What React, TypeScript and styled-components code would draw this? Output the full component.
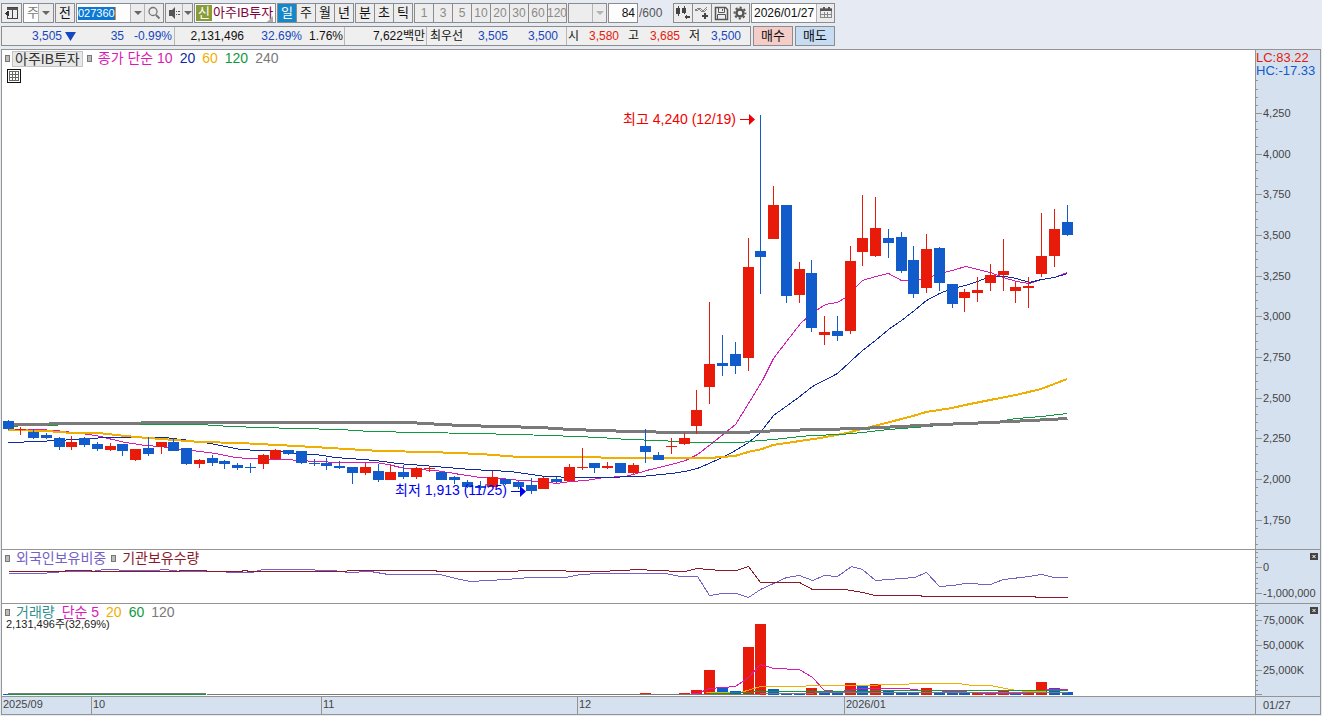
import React from "react";
import styled, { createGlobalStyle } from "styled-components";

const RED = "#e81a0a";
const BLUE = "#115bcb";
const MAGENTA = "#d91ab4";
const NAVY = "#0f2aa5";
const AMBER = "#f0ae00";
const GREEN = "#109a40";
const GRAY = "#7a7a7a";
const PURPLE = "#7460c6";
const MAROON = "#8a1a2a";
const TEAL = "#30908f";
const LINE = "#949494";
const SANS = `"Liberation Sans", "Noto Sans CJK KR", sans-serif`;

const GlobalStyle = createGlobalStyle`
  * { box-sizing: border-box; }
  body { margin: 0; background: #e6eaf3; font-family: ${SANS}; font-size: 12px; color: #111; }
  button, input, select { font: inherit; color: inherit; margin: 0; padding: 0; border: 0; background: none; border-radius: 0; }
  svg { display: block; }
`;

/* ---------- toolbar ---------- */

const Header = styled.header`
  display: flex;
  flex-direction: column;
  gap: 3px;
  padding: 3px 1px;
  white-space: nowrap;
`;

const ToolRow = styled.div`
  display: flex;
  gap: 1px;
  height: 20px;
`;

const Box = styled.div<{ $w: number; $fill?: string }>`
  display: flex;
  flex: none;
  align-items: stretch;
  width: ${(p) => p.$w}px;
  border: 1px solid #8c8c8c;
  background: ${(p) => p.$fill ?? "#fdfdfd"};
  overflow: hidden;
`;

const ToolButton = styled.button<{ $divided?: boolean; $active?: boolean; $muted?: boolean }>`
  display: flex;
  flex: 1 1 0;
  min-width: 0;
  align-items: center;
  justify-content: center;
  line-height: 18px;
  font-size: ${(p) => (p.$muted ? 12 : 13)}px;
  background: ${(p) => (p.$active ? "#1787c8" : "#ededed")};
  color: ${(p) => (p.$active ? "#fff" : p.$muted ? "#8a8a8a" : "#111")};
  & + & { border-left: 1px solid #8c8c8c; }
`;

const Arrow = styled.button<{ $w: number; $muted?: boolean }>`
  flex: none;
  display: flex;
  align-items: center;
  justify-content: center;
  width: ${(p) => p.$w}px;
  background: #ececec;
  border-left: 1px solid #b4b4b4;
  &::after {
    content: "";
    border: 4px solid transparent;
    border-bottom: 0;
    border-top-color: ${(p) => (p.$muted ? "#b4b4b4" : "#666")};
  }
`;

const PlainSelect = styled.select`
  appearance: none;
  flex: 1;
  min-width: 0;
  padding-left: 3px;
  font-size: 13px;
  line-height: 18px;
  color: #777;
`;

const CodeInput = styled.input`
  align-self: center;
  width: 38px;
  height: 13px;
  margin: 0 auto 0 1px;
  font-size: 11px;
  background: #0a78d4;
  color: #fff;
  border-right: 1px solid #f08a24;
`;

const IconButton = styled.button<{ $w: number }>`
  flex: none;
  display: flex;
  align-items: center;
  justify-content: center;
  width: ${(p) => p.$w}px;
  background: #ececec;
  border-left: 1px solid #b4b4b4;
  &:first-child { border-left: 0; }
`;

const Badge = styled.span`
  flex: none;
  width: 16px;
  margin: 1px;
  line-height: 16px;
  text-align: center;
  font-size: 13px;
  background: #8a9c38;
  color: #fff;
`;

const StockName = styled.span`
  line-height: 18px;
  font-size: 13px;
  color: #80003c;
`;

const Corner = styled.span`
  align-self: flex-end;
  margin-left: -6px;
  border: 3px solid #aaa;
  border-top-color: transparent;
  border-left-color: transparent;
`;

const NumberInput = styled.input<{ $align: "left" | "right" }>`
  flex: 1;
  min-width: 0;
  padding: 0 2px;
  text-align: ${(p) => p.$align};
`;

const Limit = styled.span`
  width: 33px;
  line-height: 20px;
  color: #555;
`;

const Quote = styled.div`
  display: flex;
  width: 750px;
  border: 1px solid #8c8c8c;
  background: #efefef;
  line-height: 18px;
  margin-right: 1px;
`;

const QuoteCell = styled.div<{ $w: number }>`
  display: flex;
  flex: none;
  width: ${(p) => p.$w}px;
  padding-right: 2px;
  border-right: 1px solid #b8b8b8;
  &:last-child { border-right: 0; }
`;

const Figure = styled.span<{ $w: number; $tone?: string }>`
  flex: none;
  width: ${(p) => p.$w}px;
  text-align: right;
  color: ${(p) => p.$tone ?? "#111"};
`;

const TradeButton = styled.button<{ $fill: string }>`
  width: 40px;
  margin-right: 1px;
  border: 1px solid #8c8c8c;
  background: ${(p) => p.$fill};
  font-size: 13px;
  line-height: 18px;
`;

/* ---------- chart ---------- */

const Chart = styled.main`
  margin: 0 1px;
  border: 1px solid ${LINE};
  background: #fff;
`;

const PaneRow = styled.section`
  display: grid;
  grid-template-columns: minmax(0, 1fr) 65px;
  border-bottom: 1px solid ${LINE};
  &:last-child { border-bottom: 0; }
`;

const Plot = styled.div`
  position: relative;
  overflow: hidden;
`;

const Scale = styled.div`
  position: relative;
  border-left: 1px solid ${LINE};
  background: #d6e1ef;
`;

const Legend = styled.div`
  position: absolute;
  top: 1px;
  left: 3px;
  display: flex;
  align-items: center;
  height: 15px;
  font-size: 14px;
  line-height: 15px;
  white-space: nowrap;
`;

const Marker = styled.i`
  width: 5px;
  height: 7px;
  margin-right: 6px;
  border: 1px solid #777;
  background: #bbb;
`;

const Term = styled.span<{ $tone: string; $gap?: number }>`
  color: ${(p) => p.$tone};
  margin-right: ${(p) => p.$gap ?? 7}px;
`;

const SymbolButton = styled.button`
  height: 16px;
  margin: 0 4px 0 -4px;
  padding: 0 2px;
  border: 1px solid #c4c4c4;
  background: #e8e8e8;
  color: #333;
  line-height: 14px;
`;

const GridButton = styled.button`
  position: absolute;
  top: 19px;
  left: 5px;
`;

const VolumeNote = styled.div`
  position: absolute;
  top: 16px;
  left: 4px;
  font-size: 11px;
  line-height: 9px;
  color: #222;
`;

const Extremes = styled.div`
  position: absolute;
  top: 1px;
  left: 0;
  font-size: 13px;
  line-height: 13px;
`;

const Extreme = styled.div<{ $tone: string }>`
  color: ${(p) => p.$tone};
`;

const CloseButton = styled.button`
  position: absolute;
  top: 3px;
  right: 2px;
  width: 8px;
  height: 7px;
  background: #444;
`;

const Months = styled.div`
  display: flex;
  height: 17px;
  background: #d6e1ef;
  font-size: 11px;
  line-height: 15px;
  color: #444;
  overflow: hidden;
`;

const Month = styled.span<{ $w?: number }>`
  flex: ${(p) => (p.$w ? `0 0 ${p.$w}px` : "1 1 0")};
  padding-left: 1px;
  & + & { border-left: 1px solid ${LINE}; }
`;

const Today = styled.div`
  border-left: 1px solid ${LINE};
  background: #d6e1ef;
  padding-left: 7px;
  font-size: 11px;
  line-height: 16px;
  color: #444;
`;

/* Candles: direction, body top, body bottom, high, low */
type Candle = ["u" | "d", number, number, number, number];
const candles: Candle[] = [
  ["d", 421, 429, 420, 430], ["u", 429, 430, 427, 435], ["d", 432, 438, 429, 439], ["d", 435, 438, 433, 439],
  ["d", 438, 447, 437, 450], ["u", 442, 447, 436, 450], ["d", 438, 445, 437, 447], ["d", 444, 449, 442, 451],
  ["u", 446, 450, 443, 451], ["d", 444, 451, 444, 456], ["u", 449, 460, 449, 461], ["d", 448, 454, 437, 456],
  ["u", 442, 447, 442, 454], ["d", 442, 451, 438, 451], ["d", 448, 464, 448, 465], ["u", 460, 464, 459, 468],
  ["d", 458, 463, 455, 466], ["d", 461, 464, 460, 469], ["d", 465, 468, 463, 470], ["d", 467, 468, 463, 473],
  ["u", 455, 464, 454, 469], ["u", 450, 459, 449, 460], ["d", 450, 454, 450, 455], ["d", 451, 463, 451, 464],
  ["d", 463, 464, 459, 466], ["d", 463, 466, 458, 470], ["d", 466, 468, 461, 469], ["d", 467, 473, 467, 484],
  ["u", 467, 473, 463, 475], ["d", 471, 480, 464, 482], ["u", 472, 480, 465, 480], ["d", 472, 477, 465, 479],
  ["u", 468, 477, 467, 479], ["u", 468, 469, 466, 472], ["d", 472, 480, 472, 480], ["d", 477, 480, 476, 484],
  ["d", 482, 487, 480, 488], ["d", 486, 488, 481, 490], ["u", 477, 487, 471, 488], ["d", 479, 484, 479, 485],
  ["d", 482, 487, 481, 489], ["d", 485, 491, 478, 494], ["u", 478, 489, 477, 489], ["d", 479, 482, 477, 483],
  ["u", 467, 481, 464, 481], ["u", 467, 468, 448, 470], ["d", 463, 468, 463, 473], ["u", 466, 468, 462, 469],
  ["d", 463, 473, 463, 473], ["u", 465, 473, 463, 474], ["d", 446, 452, 429, 463], ["d", 455, 460, 452, 460],
  ["u", 446, 447, 438, 454], ["u", 438, 444, 433, 445], ["u", 410, 426, 390, 434], ["u", 364, 387, 302, 404],
  ["d", 363, 366, 335, 376], ["d", 354, 366, 342, 374], ["u", 267, 358, 238, 371], ["d", 251, 257, 115, 294],
  ["u", 205, 239, 186, 239], ["d", 205, 296, 205, 303], ["u", 269, 295, 262, 303], ["d", 273, 328, 260, 332],
  ["u", 332, 335, 316, 345], ["d", 331, 336, 316, 341], ["u", 261, 331, 246, 334], ["u", 238, 252, 195, 266],
  ["u", 228, 256, 197, 257], ["d", 238, 243, 229, 258], ["d", 237, 271, 232, 273], ["d", 260, 294, 246, 298],
  ["u", 249, 288, 234, 293], ["d", 248, 283, 247, 291], ["d", 284, 304, 284, 308], ["u", 292, 298, 289, 312],
  ["u", 290, 293, 277, 302], ["u", 275, 283, 264, 291], ["u", 271, 275, 239, 291], ["u", 287, 291, 282, 303],
  ["u", 286, 288, 277, 308], ["u", 256, 274, 213, 277], ["u", 229, 256, 209, 267], ["d", 222, 235, 205, 236],
];

/* Volume bars: candle index, direction, top */
const volumes: [number, "u" | "d", number][] = [
  [50, "u", 693], [53, "u", 693], [54, "u", 690], [55, "u", 670], [56, "d", 687], [57, "d", 691], [58, "u", 647],
  [59, "u", 624], [60, "d", 689], [61, "d", 693], [62, "d", 693], [63, "u", 688], [64, "d", 692], [65, "d", 693],
  [66, "u", 683], [67, "d", 686], [68, "u", 684], [69, "d", 690], [70, "d", 693], [71, "d", 693], [72, "u", 688],
  [73, "d", 692], [74, "d", 692], [75, "d", 693], [76, "u", 693], [77, "u", 693], [78, "u", 691], [79, "d", 693],
  [80, "u", 693], [81, "u", 682], [82, "d", 688], [83, "d", 692],
];

const lines = {
  ma10: "14,429 40,429 53,430 65,431 88,434 100,436 112,439 125,442 145,445 160,446 182,449 200,451 215,453 235,457 247,458 285,459 315,461 340,462 375,462 388,464 400,467 415,469 435,470 448,472 460,474 480,477 500,478 520,480 540,481 556,483 570,481 586,480 604,477 624,476 633,474 646,470 671,464 685,460 697,454 710,444 735,424 748,403 762,380 773,358 786,341 800,323 811,313 825,304 837,302 845,297 862,280 875,276 888,273 901,280 914,280 926,278 939,273 952,270 965,266 990,272 1003,277 1016,281 1029,283 1041,279 1054,277 1067,272",
  ma20: "8,442 40,441 53,440 78,439 104,437 165,437 180,439 190,440 210,443 225,446 240,449 258,450 275,450 296,453 315,454 335,457 375,460 397,463 435,466 470,469 510,471 545,476 575,477 600,477 640,476 671,473 684,471 697,468 722,457 735,450 748,442 760,432 773,415 798,397 812,386 837,373 850,361 862,350 875,340 888,329 901,320 914,310 926,300 939,293 952,288 965,285 977,281 990,276 1005,276 1016,278 1029,282 1041,279 1054,277 1067,273",
  ma60: "8,430 47,431 72,433 98,433 125,436 148,438 175,440 200,442 240,443 296,446 330,448 380,451 430,452 480,454 520,457 582,457 620,458 709,458 735,456 748,452 762,449 773,445 800,441 820,438 847,433 862,429 886,423 913,416 926,412 939,410 952,408 965,405 990,400 1016,395 1041,389 1067,379",
  ma120: "8,426 27,425 90,424 200,424 230,426 260,427 296,428 340,429 370,431 420,432 475,433 515,434 550,435 575,436 600,437 627,439 660,440 691,442 740,442 760,440 773,439 800,436 812,435 840,434 862,432 888,429 914,427 939,425 965,423 990,422 1016,418 1041,416 1067,413",
  ma240: "8,424 90,423 192,422 408,422 425,423 460,425 500,426 540,427 570,429 600,430 630,431 680,432 740,432 780,430 820,429 860,428 900,426 940,424 990,422 1030,420 1067,418",
  foreign: "8,573 40,573 53,572 65,571 91,571 104,569 117,569 120,570 142,570 155,570 165,569 180,571 218,571 232,572 252,572 262,569 295,569 333,570 348,572 370,571 388,574 410,574 440,574 455,578 470,581 505,579 530,577 565,577 580,574 600,573 640,573 665,573 680,576 697,576 709,595 722,593 736,593 748,597 760,589 786,577 799,575 812,580 824,575 837,576 851,566 862,569 875,580 888,579 914,577 926,572 939,586 952,585 965,583 990,584 1003,579 1029,576 1041,574 1054,577 1067,577",
  inst: "8,571 64,571 66,570 90,570 92,571 178,571 180,570 205,570 207,571 240,571 244,570 250,571 345,571 348,570 435,570 437,571 505,571 530,570 600,571 640,569 652,570 684,571 697,568 720,570 736,570 748,566 760,582 799,582 812,589 844,589 862,592 875,595 920,595 922,596 1034,596 1036,597 1067,597",
  vol5: "690,693 697,693 709,688 735,686 748,677 760,664 773,668 799,669 812,677 824,690 840,691 862,688 905,688 922,690 960,691 985,693 1022,693 1035,691 1048,689 1067,689",
  vol20: "705,692 740,692 760,686 800,686 812,685 850,685 905,684 912,683 958,683 972,685 990,685 1010,689 1025,691 1067,690",
  vol60: "700,694 740,692 765,691 850,691 890,690 1067,690",
  vol120: "206,694 740,694 780,693 850,692 1067,692",
};

const candleX = (i: number) => Math.floor(8 + (i * 1059) / 83);
const tone = (d: "u" | "d") => (d === "u" ? RED : BLUE);

const Curve = ({ points, color, width = 1 }: { points: string; color: string; width?: number }) => (
  <polyline
    points={points}
    fill="none"
    stroke={color}
    strokeWidth={width}
    transform={width === 2 ? undefined : "translate(0.5 0.5)"}
    shapeRendering="crispEdges"
  />
);

const Canvas = ({ top, height, label, children }: { top: number; height: number; label: string; children: React.ReactNode }) => (
  <svg width="100%" height={height} role="img" aria-label={label}>
    <g transform={`translate(-2 ${-top})`}>{children}</g>
  </svg>
);

type Tick = { y: number; text?: string };
const Ruler = ({ top, height, ticks }: { top: number; height: number; ticks: Tick[] }) => (
  <svg width="64" height={height} fontFamily={SANS} fontSize="11" fill="#444">
    <g transform={`translate(0 ${-top})`}>
      {ticks.map((t) => (
        <g key={t.y}>
          <rect x="0" y={t.y} width={t.text === undefined ? 2 : 6} height="1" fill={LINE} />
          {t.text && <text x="7" y={t.y + 4}>{t.text}</text>}
        </g>
      ))}
    </g>
  </svg>
);

const priceTicks: Tick[] = Array.from({ length: 58 }, (_, i) => {
  const step = i - 4;
  const y = Math.round(113 + step * 8.13);
  return step >= 0 && step % 5 === 0 && step <= 50 ? { y, text: (4250 - step * 50).toLocaleString("en-US") } : { y };
});

const holdingTicks: Tick[] = [
  { y: 552 }, { y: 557 }, { y: 562 }, { y: 567, text: "0" }, { y: 573 }, { y: 578 }, { y: 583 }, { y: 588 },
  { y: 593, text: "-1,000,000" },
];

const volumeTicks: Tick[] = Array.from({ length: 19 }, (_, i) => {
  const y = i === 18 ? 694 : 605 + i * 5;
  const text = ({ 620: "75,000K", 645: "50,000K", 670: "25,000K", 694: "" } as Record<number, string>)[y];
  return { y, text };
});

const CloseMark = ({ label }: { label: string }) => (
  <CloseButton aria-label={label}>
    <svg width="8" height="7" stroke="#fff" strokeWidth="1">
      <path d="M2.500 2L5.500 5M5.500 2L2.500 5" />
    </svg>
  </CloseButton>
);

export default function App() {
  return (
    <>
      <GlobalStyle />
      <Header>
        <ToolRow>
          <Box $w={21}>
            <ToolButton aria-label="패널 전환">
              <svg width="17" height="14" fill="none" shapeRendering="crispEdges">
                <path d="M4.500 4V1.500H14.500V12.500H4.500V10" stroke="#444" />
                <path d="M4 2H15V4H4Z" fill="#555" />
                <path d="M9.500 4V12" stroke="#444" />
                <path d="M6 5V10H5L2 8V7L5 5Z" fill="#333" />
              </svg>
            </ToolButton>
          </Box>
          <Box $w={31}>
            <PlainSelect aria-label="종목 구분" defaultValue="주">
              <option>주</option>
            </PlainSelect>
            <Arrow $w={15} aria-label="종목 구분 열기" />
          </Box>
          <Box $w={20}>
            <ToolButton>전</ToolButton>
          </Box>
          <Box $w={88}>
            <CodeInput aria-label="종목코드" defaultValue="027360" />
            <Arrow $w={14} aria-label="종목 목록" />
            <IconButton $w={19} aria-label="종목 검색">
              <svg width="14" height="14" fill="none" stroke="#777">
                <circle cx="6" cy="5.500" r="4" strokeWidth="1.300" />
                <path d="M9 9L12.500 12.500" strokeWidth="2" />
              </svg>
            </IconButton>
          </Box>
          <Box $w={28}>
            <IconButton $w={16} aria-label="음성">
              <svg width="13" height="12" fill="#555">
                <path d="M1 3H4L7 0V12L4 9H1Z" />
                <path d="M8 4h1v1h-1zM10 4h2v1h-2zM8 7h1v1h-1zM10 7h2v1h-2z" />
              </svg>
            </IconButton>
            <Arrow $w={10} aria-label="음성 설정" />
          </Box>
          <Box $w={82}>
            <Badge>신</Badge>
            <StockName>아주IB투자</StockName>
            <Corner />
          </Box>
          <Box $w={77}>
            {["일", "주", "월", "년"].map((t, i) => (
              <ToolButton key={t} $active={i === 0}>{t}</ToolButton>
            ))}
          </Box>
          <Box $w={58}>
            {["분", "초", "틱"].map((t) => (
              <ToolButton key={t}>{t}</ToolButton>
            ))}
          </Box>
          <Box $w={153}>
            {["1", "3", "5", "10", "20", "30", "60", "120"].map((t) => (
              <ToolButton key={t} $muted>{t}</ToolButton>
            ))}
          </Box>
          <Box $w={39} $fill="#ededed">
            <PlainSelect aria-label="사용자 주기" disabled />
            <Arrow $w={14} $muted aria-label="사용자 주기 열기" />
          </Box>
          <Box $w={30}>
            <NumberInput $align="right" aria-label="표시 봉 수" defaultValue="84" />
          </Box>
          <Limit>/600</Limit>
          <Box $w={77}>
            <ToolButton aria-label="봉 추가">
              <svg width="16" height="16" fill="#444" shapeRendering="crispEdges">
                <path d="M1 3h4v6h-4zM2.500 1h1v10h-1zM7 3h4v5h-4zM8.500 1h1v8h-1z" />
                <path d="M9 12L12 9V11H15V13H12V15Z" />
              </svg>
            </ToolButton>
            <ToolButton aria-label="지표 추가">
              <svg width="16" height="16" fill="none" stroke="#666">
                <path d="M1 6L4 3L8 7L13 2M1 4L3 6L6 3L10 7L13 4" strokeWidth="0.800" />
                <path d="M11 8V14M8 11H14" stroke="#444" strokeWidth="2" />
              </svg>
            </ToolButton>
            <ToolButton aria-label="저장">
              <svg width="15" height="15" fill="none" stroke="#555">
                <path d="M1.500 1.500H11.500L13.500 3.500V13.500H1.500Z" strokeWidth="1.500" />
                <path d="M4.500 2V6.500H10.500V2M3.500 13V8.500H11.500V13M8.500 3V5" />
              </svg>
            </ToolButton>
            <ToolButton aria-label="설정">
              <svg width="14" height="14" fill="none" stroke="#555">
                <circle cx="7" cy="7" r="3.500" strokeWidth="2.400" />
                <circle cx="7" cy="7" r="5.500" strokeWidth="1.800" strokeDasharray="2.200 2.120" strokeDashoffset="1.100" />
              </svg>
            </ToolButton>
          </Box>
          <Box $w={84}>
            <NumberInput $align="left" aria-label="기준일" defaultValue="2026/01/27" />
            <IconButton $w={18} aria-label="달력">
              <svg width="12" height="12" fill="none" stroke="#666" shapeRendering="crispEdges">
                <path d="M0.500 1.500H11.500V10.500H0.500ZM4.500 5V10M7.500 5V10M1 7.500H11" stroke="#888" />
                <path d="M0 3H12M3.500 0V2M8.500 0V2" stroke="#555" strokeWidth="2" />
              </svg>
            </IconButton>
          </Box>
        </ToolRow>
        <ToolRow>
          <Quote>
            <QuoteCell $w={173}>
              <Figure $w={60} $tone="#1448c0">3,505</Figure>
              <Figure $w={15} $tone="#1448c0">
                <svg width="15" height="18" fill="#1448c0"><path d="M3 5H14L8.500 14Z" /></svg>
              </Figure>
              <Figure $w={47} $tone="#1448c0">35</Figure>
              <Figure $w={48} $tone="#1448c0">-0.99%</Figure>
            </QuoteCell>
            <QuoteCell $w={170}>
              <Figure $w={69}>2,131,496</Figure>
              <Figure $w={58} $tone="#1448c0">32.69%</Figure>
              <Figure $w={41}>1.76%</Figure>
            </QuoteCell>
            <QuoteCell $w={82}>
              <Figure $w={80}>7,622백만</Figure>
            </QuoteCell>
            <QuoteCell $w={140}>
              <Figure $w={36}>최우선</Figure>
              <Figure $w={45} $tone="#1448c0">3,505</Figure>
              <Figure $w={50} $tone="#1448c0">3,500</Figure>
            </QuoteCell>
            <QuoteCell $w={183}>
              <Figure $w={12}>시</Figure>
              <Figure $w={40} $tone={RED}>3,580</Figure>
              <Figure $w={20}>고</Figure>
              <Figure $w={41} $tone={RED}>3,685</Figure>
              <Figure $w={20}>저</Figure>
              <Figure $w={41} $tone="#1448c0">3,500</Figure>
            </QuoteCell>
          </Quote>
          <TradeButton $fill="#f4cdc9">매수</TradeButton>
          <TradeButton $fill="#c5dcf3">매도</TradeButton>
        </ToolRow>
      </Header>

      <Chart>
        <PaneRow>
          <Plot>
            <Canvas top={50} height={499} label="아주IB투자 일봉">
              <Curve points={lines.ma10} color={MAGENTA} />
              <Curve points={lines.ma20} color={NAVY} />
              <Curve points={lines.ma60} color={AMBER} width={2} />
              <Curve points={lines.ma120} color={GREEN} />
              <Curve points={lines.ma240} color={GRAY} width={3} />
              {candles.map(([d, top, bottom, high, low], i) => (
                <g key={i} fill={tone(d)}>
                  <rect x={candleX(i)} y={high} width="1" height={low - high} />
                  <rect x={candleX(i) - 5} y={top} width="11" height={bottom - top} />
                </g>
              ))}
              <g fontFamily={SANS} fontSize="14">
                <text x="736" y="124" textAnchor="end" fill="#f00000">최고 4,240 (12/19)</text>
                <path d="M740 119H749V114L755 119.500L749 125V120H740Z" fill="#f00000" />
                <text x="507" y="495" textAnchor="end" fill="#0000f0">최저 1,913 (11/25)</text>
                <path d="M511 491H520V486L526 491.500L520 497V492H511Z" fill="#0000f0" />
              </g>
            </Canvas>
            <Legend>
              <Marker />
              <SymbolButton>아주IB투자</SymbolButton>
              <Marker />
              <Term $tone={MAGENTA}>종가 단순 10</Term>
              <Term $tone={NAVY}>20</Term>
              <Term $tone={AMBER}>60</Term>
              <Term $tone={GREEN}>120</Term>
              <Term $tone={GRAY}>240</Term>
            </Legend>
            <GridButton aria-label="데이터 표">
              <svg width="14" height="14" fill="none" shapeRendering="crispEdges">
                <rect x="0.500" y="0.500" width="13" height="13" fill="#fff" stroke="#111" />
                <path d="M2.500 2.500H11.500V11.500H2.500ZM2 5.500H12M2 8.500H12M5.500 2V12M8.500 2V12" stroke="#666" />
              </svg>
            </GridButton>
          </Plot>
          <Scale>
            <Ruler top={50} height={499} ticks={priceTicks} />
            <Extremes>
              <Extreme $tone={RED}>LC:83.22</Extreme>
              <Extreme $tone={BLUE}>HC:-17.33</Extreme>
            </Extremes>
          </Scale>
        </PaneRow>

        <PaneRow>
          <Plot>
            <Canvas top={550} height={53} label="외국인보유비중, 기관보유수량">
              <Curve points={lines.foreign} color={PURPLE} />
              <Curve points={lines.inst} color={MAROON} />
            </Canvas>
            <Legend>
              <Marker />
              <Term $tone={PURPLE} $gap={5}>외국인보유비중</Term>
              <Marker />
              <Term $tone={MAROON}>기관보유수량</Term>
            </Legend>
          </Plot>
          <Scale>
            <Ruler top={550} height={53} ticks={holdingTicks} />
            <CloseMark label="보유 지표 닫기" />
          </Scale>
        </PaneRow>

        <PaneRow>
          <Plot>
            <Canvas top={604} height={92} label="거래량">
              <rect x="3" y="694" width="5" height="1" fill={BLUE} />
              {volumes.map(([i, d, top]) => (
                <rect key={i} x={candleX(i) - 5} y={top} width="11" height={695 - top} fill={tone(d)} />
              ))}
              <rect x="8" y="693" width="198" height="1" fill={GRAY} />
              <rect x="8" y="694" width="198" height="1" fill={GREEN} />
              <Curve points={lines.vol5} color={MAGENTA} />
              <Curve points={lines.vol20} color={AMBER} />
              <Curve points={lines.vol60} color={GREEN} />
              <Curve points={lines.vol120} color={GRAY} />
            </Canvas>
            <Legend>
              <Marker />
              <Term $tone={TEAL}>거래량</Term>
              <Term $tone={MAGENTA}>단순 5</Term>
              <Term $tone={AMBER}>20</Term>
              <Term $tone={GREEN}>60</Term>
              <Term $tone={GRAY}>120</Term>
            </Legend>
            <VolumeNote>2,131,496주(32,69%)</VolumeNote>
          </Plot>
          <Scale>
            <Ruler top={604} height={92} ticks={volumeTicks} />
            <CloseMark label="거래량 닫기" />
          </Scale>
        </PaneRow>

        <PaneRow>
          <Months>
            <Month $w={89}>2025/09</Month>
            <Month $w={230}>10</Month>
            <Month $w={256}>11</Month>
            <Month $w={267}>12</Month>
            <Month>2026/01</Month>
          </Months>
          <Today>01/27</Today>
        </PaneRow>
      </Chart>
    </>
  );
}
